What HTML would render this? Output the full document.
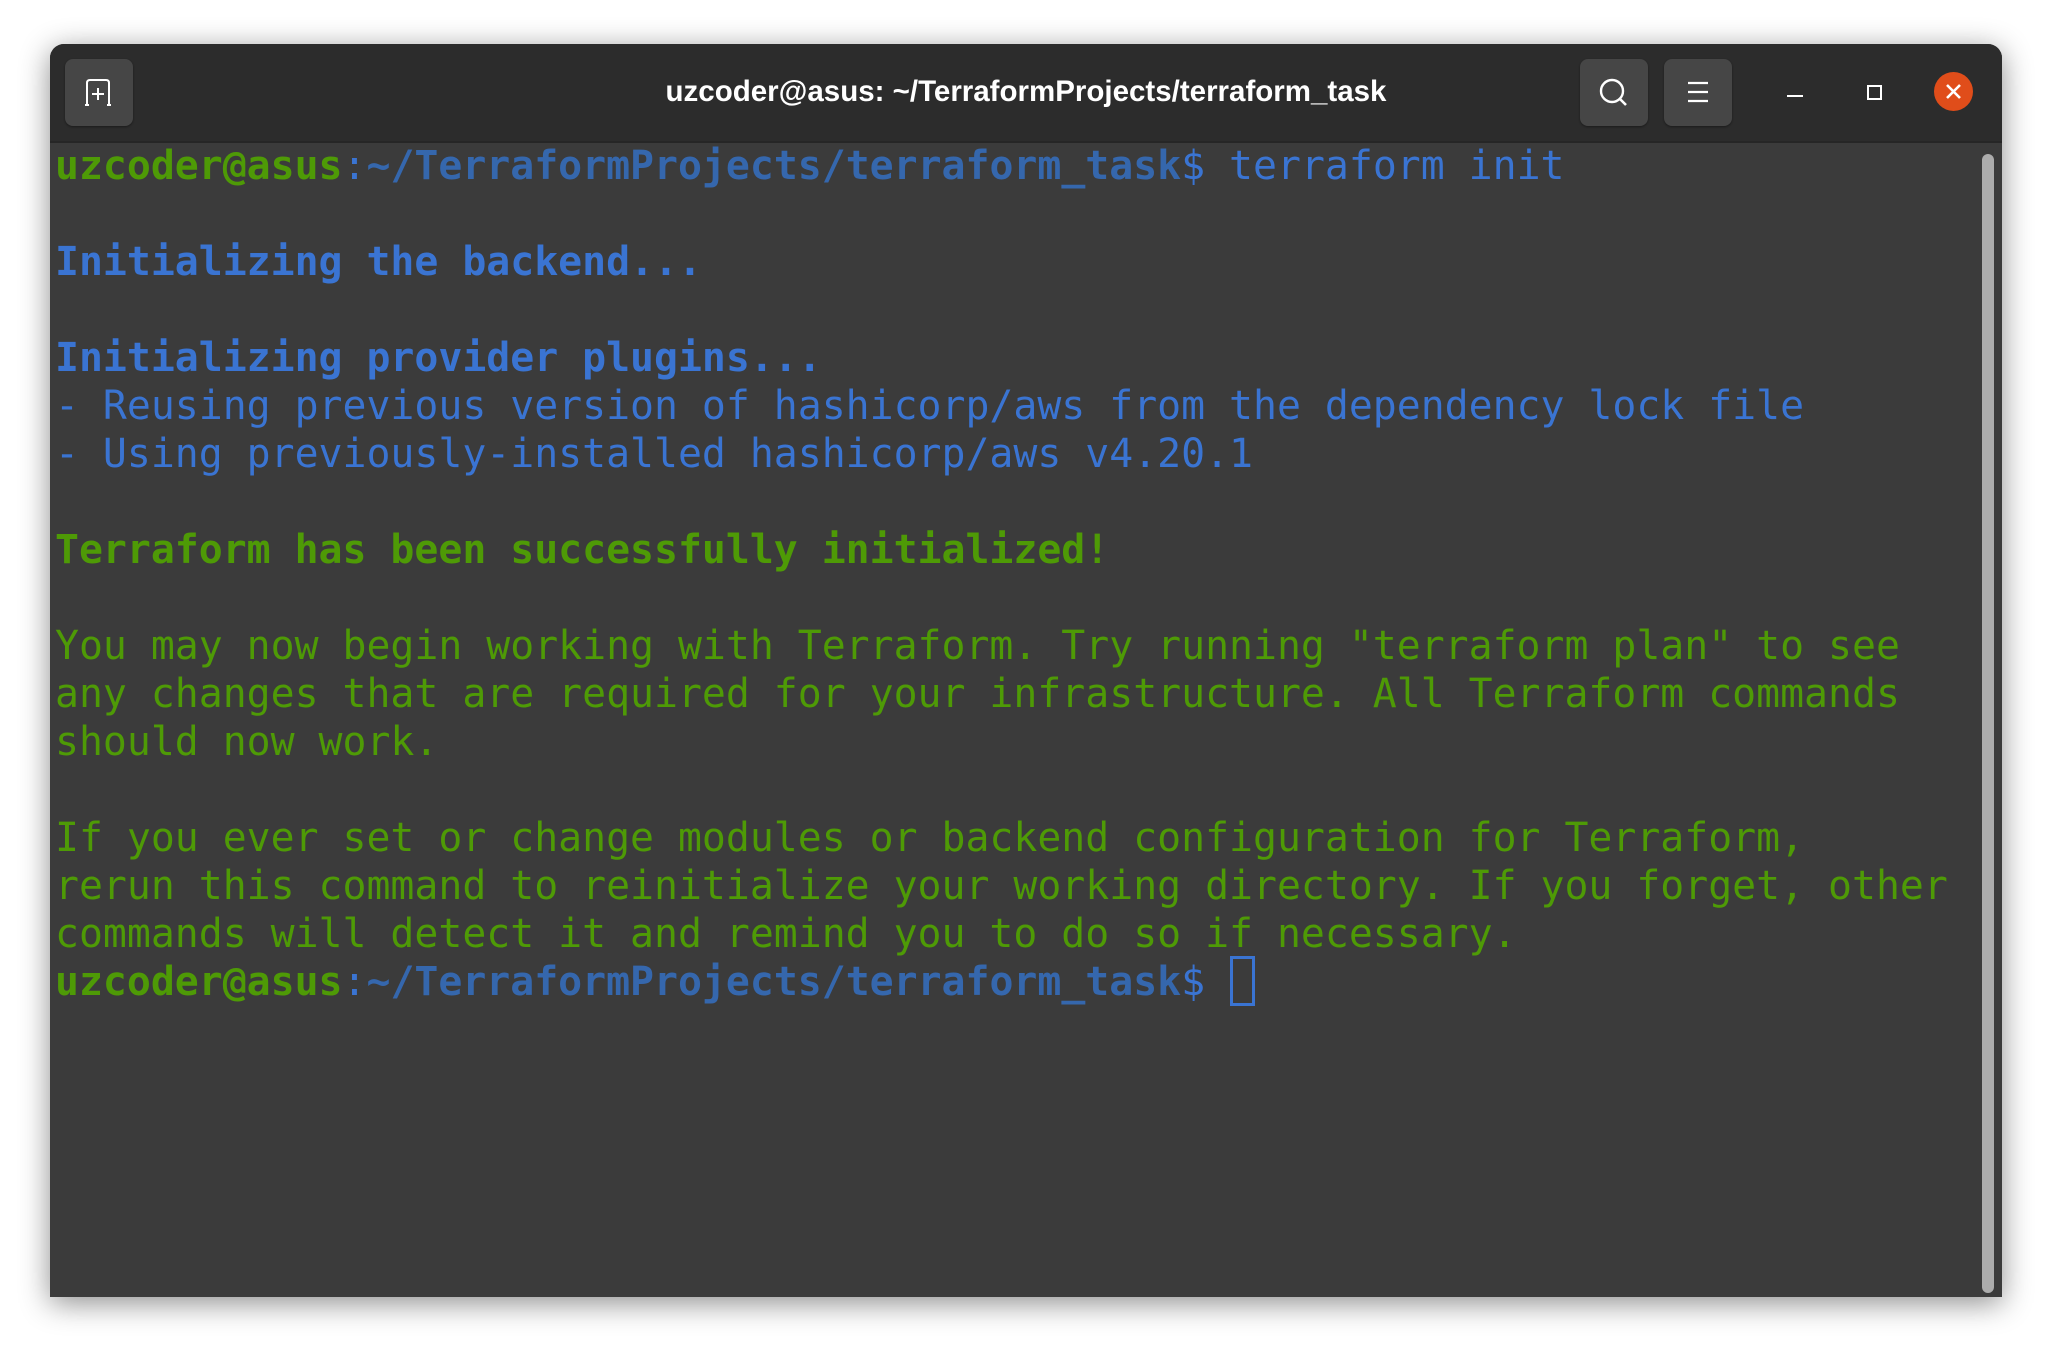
<!DOCTYPE html>
<html><head><meta charset="utf-8"><style>
html,body{margin:0;padding:0;width:2052px;height:1354px;background:#fff;overflow:hidden}
.win{position:absolute;left:50px;top:44px;width:1952px;height:1253px;background:#3b3b3b;border-radius:14px 14px 0 0;box-shadow:0 6px 30px rgba(0,0,0,.45);overflow:hidden}
.tb{position:absolute;left:0;top:0;width:100%;height:97px;background:#2c2c2c;border-bottom:2px solid #262626}
.btn{position:absolute;top:15px;width:68px;height:67px;background:#464646;border-radius:8px;box-shadow:0 1px 2px rgba(0,0,0,.4)}
.title{position:absolute;left:0;right:0;top:0;height:97px;text-align:center;color:#fff;font:bold 29.5px "Liberation Sans",sans-serif;line-height:96px;letter-spacing:0}
.term{position:absolute;left:5px;top:98px;font-family:"DejaVu Sans Mono","Liberation Mono",monospace;font-size:39.8px;line-height:48px;white-space:pre;color:#4e9a06}
.g{color:#4e9a06;font-weight:bold}
.p{color:#3567ad;font-weight:bold}
.b{color:#3a74d2}
.bb{color:#3a74d2;font-weight:bold}
.gb{font-weight:bold}
.cur{position:absolute;left:1180px;top:912px;width:25px;height:50px;border:3px solid #3a74d2;box-sizing:border-box}
.sb{position:absolute;left:1932px;top:110px;width:12px;height:1139px;background:#acacac;border-radius:6px}
</style></head><body>
<div class="win">
 <div class="tb">
  <div class="btn" style="left:15px"><svg width="68" height="67" viewBox="0 0 68 67"><path d="M22 46 V24 Q22 21 25 21 H41 Q44 21 44 24 V46" fill="none" stroke="#fff" stroke-width="2"/><path d="M20 46h4M42 46h4" stroke="#fff" stroke-width="2"/><path d="M33 29v12M27 35h12" stroke="#fff" stroke-width="2"/></svg></div>
  <div class="title">uzcoder@asus: ~/TerraformProjects/terraform_task</div>
  <div class="btn" style="left:1530px"><svg width="68" height="67" viewBox="0 0 68 67"><circle cx="32" cy="32" r="11" fill="none" stroke="#fff" stroke-width="2.4"/><path d="M40 40l6 6" stroke="#fff" stroke-width="2.6"/></svg></div>
  <div class="btn" style="left:1614px"><svg width="68" height="67" viewBox="0 0 68 67"><path d="M24 24h20M24 33h20M24 42h20" stroke="#fff" stroke-width="2.2"/></svg></div>
  <div style="position:absolute;left:1737px;top:51px;width:16px;height:2px;background:#fff"></div>
  <div style="position:absolute;left:1817px;top:41px;width:11px;height:11px;border:2px solid #fff"></div>
  <div style="position:absolute;left:1884px;top:28px;width:39px;height:39px;border-radius:50%;background:#e04d1a"><svg width="39" height="39" viewBox="0 0 39 39"><path d="M13 13l13 13M26 13l-13 13" stroke="#fff" stroke-width="2.6"/></svg></div>
 </div>
 <div class="term"><span class="g">uzcoder@asus</span><span class="b">:</span><span class="p">~/TerraformProjects/terraform_task</span><span class="b">$ terraform init</span>

<span class="bb">Initializing the backend...</span>

<span class="bb">Initializing provider plugins...</span>
<span class="b">- Reusing previous version of hashicorp/aws from the dependency lock file</span>
<span class="b">- Using previously-installed hashicorp/aws v4.20.1</span>

<span class="gb">Terraform has been successfully initialized!</span>

You may now begin working with Terraform. Try running "terraform plan" to see
any changes that are required for your infrastructure. All Terraform commands
should now work.

If you ever set or change modules or backend configuration for Terraform,
rerun this command to reinitialize your working directory. If you forget, other
commands will detect it and remind you to do so if necessary.
<span class="g">uzcoder@asus</span><span class="b">:</span><span class="p">~/TerraformProjects/terraform_task</span><span class="b">$ </span></div>
 <div class="cur"></div>
 <div class="sb"></div>
</div>
</body></html>
